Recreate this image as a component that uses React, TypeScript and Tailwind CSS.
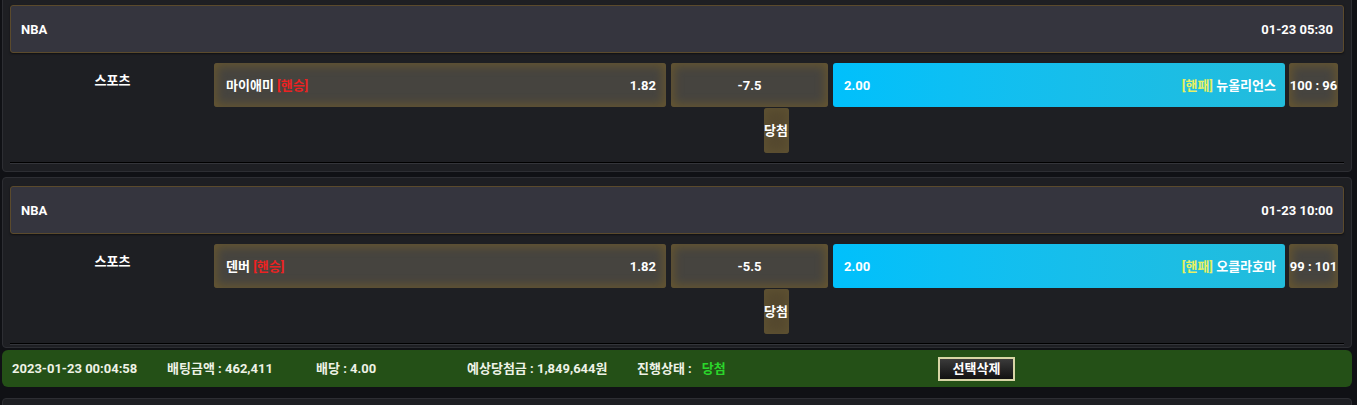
import React from 'react';

interface Game {
  league: string;
  time: string;
  home: string;
  odds1: string;
  handicap: string;
  odds2: string;
  away: string;
  score: string;
}

const games: Game[] = [
  { league: 'NBA', time: '01-23 05:30', home: '마이애미', odds1: '1.82', handicap: '-7.5', odds2: '2.00', away: '뉴올리언스', score: '100 : 96' },
  { league: 'NBA', time: '01-23 10:00', home: '덴버', odds1: '1.82', handicap: '-5.5', odds2: '2.00', away: '오클라호마', score: '99 : 101' },
];

const olive = 'bg-[#46443f] shadow-[inset_0_0_10px_3px_#655530] rounded-[3px]';

function GameCard({ game, first, last }: { game: Game; first?: boolean; last?: boolean }) {
  return (
    <div
      className={`bg-[#1e1f23] border border-[#2d2e33] rounded-[4px] px-[7px] pt-[8px] ${first ? '-mt-[4px]' : ''} ${last ? 'pb-[2px]' : 'pb-[7px]'}`}
    >
      {/* league header */}
      <div className="h-[48px] flex items-center justify-between px-[10px] bg-[#35353e] border border-[#5b4a2c] rounded-[3px] shadow-[0_1px_2px_rgba(0,0,0,0.5)]">
        <span>{game.league}</span>
        <span>{game.time}</span>
      </div>

      <div className="flex mt-[10px]">
        <div className="w-[204px] h-[44px] flex justify-center pt-[11px] pl-[1px]">스포츠</div>
        <div className="w-[1124px] flex flex-col items-center">
          <div className="flex w-full h-[44px]">
            <div className={`${olive} w-[452px] flex items-center justify-between pl-[12px] pr-[10px]`}>
              <span>
                {game.home} <span className="text-[#ec2222]">[핸승]</span>
              </span>
              <span>{game.odds1}</span>
            </div>
            <div className={`${olive} ml-[5px] w-[157px] flex items-center justify-center`}>{game.handicap}</div>
            <div className="ml-[5px] w-[452px] flex items-center justify-between pl-[11px] pr-[9px] rounded-[3px] bg-gradient-to-r from-[#00c0fc] to-[#22bcdc]">
              <span>{game.odds2}</span>
              <span>
                <span className="text-[#e8f062]">[핸패]</span> {game.away}
              </span>
            </div>
            <div className={`${olive} ml-[4px] w-[49px] flex items-center justify-center whitespace-nowrap`}>{game.score}</div>
          </div>
          <div className="mt-[1px] w-[25px] h-[45px] rounded-[3px] bg-[#55492f] shadow-[inset_0_0_8px_2px_#5f5232] flex items-center justify-center">
            당첨
          </div>
        </div>
      </div>

      <div className="mt-[9px] border-t border-black border-b border-b-[#34353a] h-[2px]" />
    </div>
  );
}

export default function App() {
  return (
    <div
      className="w-[1357px] h-[405px] overflow-hidden bg-[#101115] text-white text-[13px] font-bold leading-none pl-[2px] pr-[5px]"
      style={{ fontFamily: "Roboto, 'Noto Sans CJK KR', sans-serif" }}
    >
      <div className="flex flex-col">
        <GameCard game={games[0]} first />
        <div className="mt-[5px]">
          <GameCard game={games[1]} last />
        </div>

        {/* bet summary */}
        <div className="mt-[2px] h-[37px] bg-[#245017] rounded-[6px] flex items-center pl-[10px] text-[#eef2e6]">
          <span className="w-[155px]">2023-01-23 00:04:58</span>
          <span className="w-[149px]">배팅금액 : 462,411</span>
          <span className="w-[151px]">배당 : 4.00</span>
          <span className="w-[170px]">예상당첨금 : 1,849,644원</span>
          <span className="w-[301px] flex">
            진행상태 :<span className="ml-[10px] text-[#2bd62b]">당첨</span>
          </span>
          <button className="w-[77px] h-[24px] border-2 border-[#d7d5a6] bg-gradient-to-b from-[#3b3b3b] to-[#121212] text-white text-[13px] font-bold">
            선택삭제
          </button>
        </div>

        <div className="mt-[11px] h-[20px] bg-[#1e1f23] border border-[#2d2e33] rounded-[4px]" />
      </div>
    </div>
  );
}
